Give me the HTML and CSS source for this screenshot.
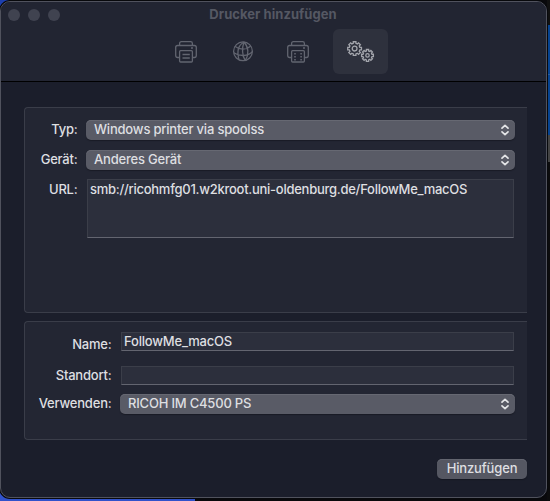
FILE: index.html
```html
<!DOCTYPE html>
<html lang="de">
<head>
    <meta charset="utf-8">
    <title>Drucker hinzufügen</title>
    <link rel="stylesheet" href="styles.css">
</head>
<body>
    <div class="window">
        <header class="toolbar">
            <div class="titlebar">
                <div class="lights"><span></span><span></span><span></span></div>
                <h1>Drucker hinzufügen</h1>
            </div>
            <nav class="tabs">
                <div class="tab">
                    <svg width="22" height="22" viewBox="0 0 22 22">
                        <path d="M4.5 16.5H2.6Q.7 16.5.7 14.6V6.4Q.7 4.5 2.6 4.5H19.4Q21.3 4.5 21.3 6.4V14.6Q21.3 16.5 19.4 16.5H17.5"/>
                        <path d="M4.6 4.3V2.5Q4.6.7 6.4.7H15.6Q17.4.7 17.4 2.5V4.3"/>
                        <rect x="4.6" y="9.7" width="12.8" height="11.3" rx="1"/>
                        <path d="M7.5 13.5H14.8M7.5 17H14.8"/>
                        <circle class="dot" cx="17" cy="7.1" r="1"/>
                    </svg>
                </div>
                <div class="tab globe">
                    <svg width="22" height="22" viewBox="0 0 22 22">
                        <circle cx="11" cy="10.3" r="9.4"/>
                        <path d="M12 1C5.5 4.7 5 12 7.1 19M12 1C16.6 6 17.2 13.5 13.3 19.6M12 1C9.8 7 10 14.8 13.3 19.6M2.8 5.3C7.6 9 14.5 9 18.8 4.9M1.7 11.8C8 15.9 16 15.2 20.3 10.8"/>
                    </svg>
                </div>
                <div class="tab">
                    <svg width="22" height="22" viewBox="0 0 22 22">
                        <path d="M4.5 16.5H2.6Q.7 16.5.7 14.6V6.4Q.7 4.5 2.6 4.5H19.4Q21.3 4.5 21.3 6.4V14.6Q21.3 16.5 19.4 16.5H17.5"/>
                        <path d="M4.6 4.3V2.5Q4.6.7 6.4.7H15.6Q17.4.7 17.4 2.5V4.3"/>
                        <rect x="4.6" y="9.7" width="12.8" height="11.3" rx="1"/>
                        <path class="dashes" d="M8 12V20M14.1 12V20"/>
                        <circle class="dot" cx="17" cy="7.1" r="1"/>
                    </svg>
                </div>
                <div class="tab active">
                    <svg id="gears" width="28" height="22" viewBox="0 0 28 22"></svg>
                </div>
            </nav>
        </header>
        <main>
            <section class="panel device">
                <label>Typ:</label>
                <div class="select">Windows printer via spoolss
                    <svg width="8" height="12" viewBox="0 0 8 12"><path d="M1 4.2L4 1.3L7 4.2M1 7.8L4 10.7L7 7.8"/></svg>
                </div>
                <label>Gerät:</label>
                <div class="select">Anderes Gerät
                    <svg width="8" height="12" viewBox="0 0 8 12"><path d="M1 4.2L4 1.3L7 4.2M1 7.8L4 10.7L7 7.8"/></svg>
                </div>
                <label>URL:</label>
                <div class="field url">smb://ricohmfg01.w2kroot.uni-oldenburg.de/FollowMe_macOS</div>
            </section>
            <section class="panel info">
                <label class="name-label">Name:</label>
                <div class="field">FollowMe_macOS</div>
                <label>Standort:</label>
                <div class="field"></div>
                <label>Verwenden:</label>
                <div class="select">RICOH IM C4500 PS
                    <svg width="8" height="12" viewBox="0 0 8 12"><path d="M1 4.2L4 1.3L7 4.2M1 7.8L4 10.7L7 7.8"/></svg>
                </div>
            </section>
            <footer>
                <button>Hinzufügen</button>
            </footer>
        </main>
    </div>

    <script>
        // outline of a gear with eight square teeth, plus its hub
        function gear(cx, cy, outer, inner, hub) {
            const points = [];
            for (let i = 0; i < 8; i++) {
                const a = i * Math.PI / 4;
                [[-0.25, inner], [-0.19, outer], [0.19, outer], [0.25, inner]].forEach(([d, r]) => {
                    points.push((cx + Math.cos(a + d) * r).toFixed(2) + ' ' + (cy + Math.sin(a + d) * r).toFixed(2));
                });
            }
            return `<path d="M${points.join('L')}Z"/><circle cx="${cx}" cy="${cy}" r="${hub}"/>`;
        }

        document.getElementById('gears').innerHTML =
            gear(7.6, 7.6, 7, 5.4, 2.4) + gear(20.5, 14.4, 6, 4.6, 1.7);
    </script>
</body>
</html>
```
FILE: styles.css
```css
* {
    box-sizing: border-box;
}

body {
    margin: 0;
    padding: 1px 3px 3px 0;
    height: 501px;
    overflow: hidden;
    font-family: Inter, "Liberation Sans", sans-serif;
    font-size: 13px;
    font-weight: 500;
    line-height: 20px;
    letter-spacing: -0.2px;
    color: #dedfe1;
    background:
        linear-gradient(#1d3fae, #1d3fae) 0 0 / 9px 6px no-repeat,
        linear-gradient(#3152cb, #3152cb) 0 100% / 195px 12px no-repeat,
        linear-gradient(#111 25px, #064391 25px 74px, #2c5c9a 74px 75px, #064391 75px 135px, #434343 135px 162px, #0c0c0d 162px) 100% 0 / 3px 100% no-repeat,
        #09090c;
}

.window {
    height: 497px;
    border: 1px solid #50525d;
    border-radius: 10px;
    background: #1b1e2b;
    box-shadow: 0 0 0 1px #08090c;
    overflow: hidden;
}

.toolbar {
    height: 80px;
    background: #222532;
    border-bottom: 1px solid #000;
}

.titlebar {
    display: grid;
    grid-template-columns: 78px 1fr 78px;
    align-items: center;
    height: 26px;
}

.lights {
    display: flex;
    gap: 8px;
    padding-left: 7px;
}

.lights span {
    width: 12px;
    height: 12px;
    border-radius: 50%;
    background: #404350;
}

h1 {
    margin: 0 1px 2px 0;
    font-size: 13px;
    font-weight: 700;
    letter-spacing: 0.05px;
    text-align: center;
    color: #555863;
}

.tabs {
    display: flex;
    gap: 1px;
    padding: 1px 0 0 157.5px;
}

.tab {
    display: flex;
    justify-content: center;
    width: 55px;
    height: 45px;
    padding-top: 12px;
    border-radius: 6px;
}

.tab svg {
    fill: none;
    stroke: #626570;
    stroke-width: 1.3;
}

.tab .dot {
    fill: #626570;
    stroke: none;
}

.tab .dashes {
    stroke-width: 1.6;
    stroke-dasharray: 1.5 1.5;
}

.tab.globe {
    padding-left: 2px;
}

.tab.active {
    margin-left: 6.5px;
    background: #2e313d;
}

.tab.active svg {
    stroke: #a3a5ac;
}

main {
    padding: 25px 19px 0 23px;
}

.panel {
    display: grid;
    align-content: start;
    background: #232633;
    border: 1px solid #3a3d49;
    border-right: 0;
    border-radius: 4px 0 0 4px;
}

.device {
    grid-template-columns: 53px 429px;
    grid-template-rows: 20px 20px 59px;
    column-gap: 8px;
    row-gap: 10px;
    height: 206px;
    padding-top: 12px;
}

.info {
    grid-template-columns: 87px 395px;
    grid-template-rows: 19px 19px 20px;
    column-gap: 8px;
    height: 119px;
    margin-top: 8px;
    padding-top: 10px;
    row-gap: 15px;
}

label {
    margin: -1px 0.5px 0 0;
    text-align: right;
    white-space: nowrap;
}

.select {
    display: flex;
    justify-content: space-between;
    height: 20px;
    padding: 0 6px 0 8px;
    line-height: 18px;
    border-radius: 5px;
    background: #595b66;
    box-shadow: inset 0 1px #666872, 0 1px 1px #191b25;
}

.select svg {
    margin-top: 4px;
    fill: none;
    stroke: #e4e5e7;
    stroke-width: 1.7;
    stroke-linecap: round;
    stroke-linejoin: round;
}

.field {
    margin: 0 1px;
    padding-left: 2px;
    line-height: 16px;
    background: #2c2f3c;
    border: 1px solid #3b3e49;
    border-bottom-color: #636570;
}

.url {
    margin-top: -1px;
    height: 59px;
    padding-top: 1px;
    letter-spacing: -0.265px;
}

.info .select {
    margin-top: -6px;
}

.info label:last-of-type {
    margin-top: -7px;
}

label.name-label {
    margin-top: 2px;
}

footer {
    display: flex;
    justify-content: flex-end;
    padding-top: 19px;
}

button {
    width: 90px;
    height: 20px;
    padding: 0 0 2px;
    border: 0;
    border-radius: 5px;
    background: #555762;
    box-shadow: inset 0 1px #63656f, 0 1px 1px #151722;
    color: #dedfe1;
    font: inherit;
    line-height: 18px;
    letter-spacing: -0.15px;
}
```
